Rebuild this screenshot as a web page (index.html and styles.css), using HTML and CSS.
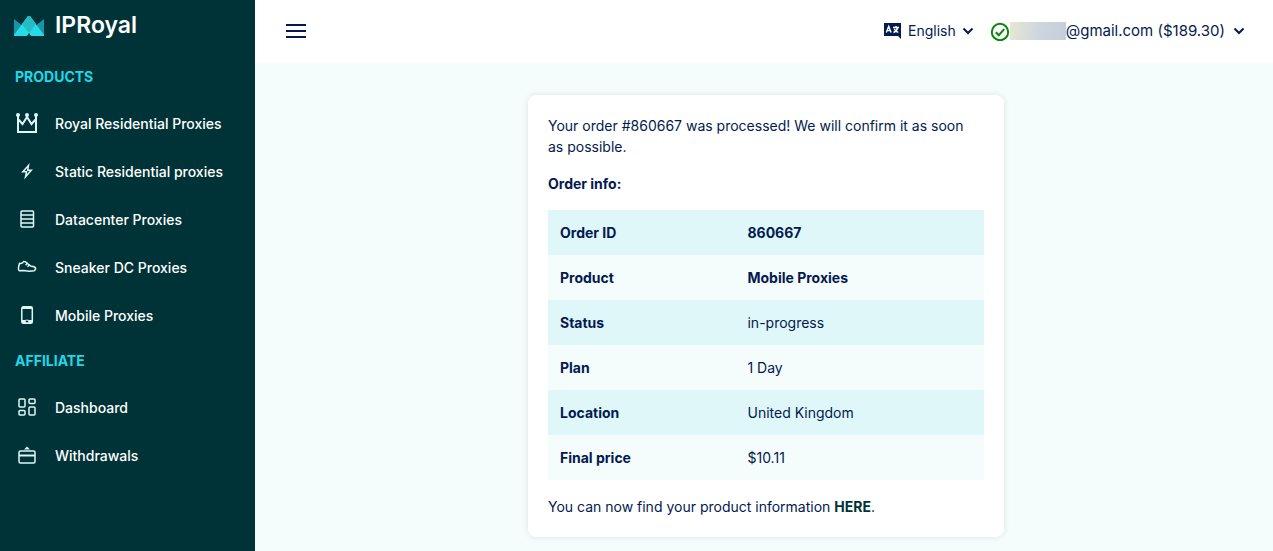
FILE: index.html
```html
<!DOCTYPE html>
<html lang="en">
<head>
    <meta charset="utf-8">
    <title>IPRoyal - Order</title>
    <link rel="stylesheet" href="styles.css">
</head>
<body>
    <aside class="sidebar">
        <a class="logo" href="#">
            <svg width="30" height="20" viewBox="0 0 30 20">
                <path fill="#1995a8" d="M0 3l10 8-10 9zM30 3l-10 8 10 9z"/>
                <path fill="#25dbe5" d="M14 0h2l14 19v1H17l-2-3-2 3H0v-1z"/>
                <path fill="#25bcc4" d="M14 0h2l6 8-7 9-7-9z"/>
            </svg>
            <span>IPRoyal</span>
        </a>

        <nav>
            <h2>Products</h2>
            <ul>
                <li><a href="#">
                    <svg width="24" height="24" viewBox="0 0 24 24" fill="none" stroke="#dff7f9" stroke-width="2">
                        <path d="M3 5v16h18V5v3l-4.5 5L12 6l-4.5 7L3 8z"/>
                        <circle cx="3" cy="4" r="2" fill="#dff7f9" stroke="none"/>
                        <circle cx="12" cy="4" r="2" fill="#dff7f9" stroke="none"/>
                        <circle cx="21" cy="4" r="2" fill="#dff7f9" stroke="none"/>
                    </svg>
                    Royal Residential Proxies</a></li>
                <li><a href="#">
                    <svg width="24" height="24" viewBox="0 0 24 24" fill="none" stroke="#dff7f9" stroke-width="1.5">
                        <path d="M13.5 6.5L7.8 12.8h3.7l-1 5 5.8-6.6h-3.6z"/>
                    </svg>
                    Static Residential proxies</a></li>
                <li><a href="#">
                    <svg width="24" height="24" viewBox="0 0 24 24" fill="none" stroke="#dff7f9" stroke-width="1.5">
                        <rect x="6" y="4" width="12.5" height="16" rx="1"/>
                        <path d="M6 8h12.5M6 12h12.5M6 16h12.5"/>
                    </svg>
                    Datacenter Proxies</a></li>
                <li><a href="#">
                    <svg width="24" height="24" viewBox="0 0 24 24" fill="none" stroke="#dff7f9" stroke-width="1.5" stroke-linejoin="round" stroke-linecap="round">
                        <path d="M4.5 8.2c1.6.5 3.3.2 4.2-1.8l2 .6 4.8 4 3.6.8c1.2.5 1.7 1.5 1.3 2.7l-1.2 1.3-4.7.5c-3 .1-4.5-.9-7-.9l-3.2.3c-.9-.8-1-2-.8-3.4z"/>
                        <path d="M11 9.8l1.3-1.5M13 11.4l1.3-1.6"/>
                    </svg>
                    Sneaker DC Proxies</a></li>
                <li><a href="#">
                    <svg width="24" height="24" viewBox="0 0 24 24" fill="none" stroke="#dff7f9" stroke-width="1.5">
                        <rect x="6.8" y="3.8" width="10.5" height="16.5" rx="1.5"/>
                        <path d="M7 5h10" stroke-width="2"/>
                        <path d="M7 18.5h3.8M13.2 18.5H17" stroke-width="3"/>
                        <path d="M10.5 17.2h3M10.5 20h3" stroke-width="1"/>
                    </svg>
                    Mobile Proxies</a></li>
            </ul>

            <h2>Affiliate</h2>
            <ul>
                <li><a href="#">
                    <svg width="24" height="24" viewBox="0 0 24 24" fill="none" stroke="#dff7f9" stroke-width="1.5">
                        <rect x="4" y="4" width="6" height="8" rx="1"/>
                        <rect x="14" y="4" width="6" height="4.5" rx="1"/>
                        <rect x="4" y="15.5" width="6" height="4.5" rx="1"/>
                        <rect x="14" y="12" width="6" height="8" rx="1"/>
                    </svg>
                    Dashboard</a></li>
                <li><a href="#">
                    <svg width="24" height="24" viewBox="0 0 24 24" fill="none" stroke="#dff7f9" stroke-width="1.5">
                        <rect x="4" y="8" width="16" height="12" rx="1.5"/>
                        <path d="M4 12.5h16" stroke-width="2"/>
                        <path d="M9 6.5l3-3 3 3z" fill="#dff7f9" stroke="none"/>
                    </svg>
                    Withdrawals</a></li>
            </ul>
        </nav>
    </aside>

    <div class="page">
        <header>
            <button class="menu-button" type="button" aria-label="Toggle menu">
                <span></span>
                <span></span>
                <span></span>
            </button>

            <div class="language">
                <svg width="18" height="18" viewBox="0 0 18 18">
                    <path fill="#021a50" d="M0 1h17v16l-3-3H0z"/>
                    <path fill="none" stroke="#fff" stroke-width="1.4" d="M2.3 10.5l2.4-6 2.4 6M3.2 8.6h3M9 5.5h6M12 4v1.5M9.5 10.5c2.3-1 3.8-2.8 4.2-5M10.3 7c.7 1.6 2 2.8 4 3.4"/>
                </svg>
                <select aria-label="Language">
                    <option>English</option>
                </select>
                <svg class="chevron" width="12" height="8" viewBox="0 0 12 8">
                    <path d="M1.5 1.5L6 6l4.5-4.5"/>
                </svg>
            </div>

            <button class="account" type="button">
                <svg class="check" width="20" height="20" viewBox="0 0 20 20">
                    <circle cx="10" cy="11" r="8.2"/>
                    <path d="M5.8 11.2l3 3 5.4-6"/>
                </svg>
                <span class="hidden-name"></span>
                <span>@gmail.com ($189.30)</span>
                <svg class="chevron" width="12" height="8" viewBox="0 0 12 8">
                    <path d="M1.5 1.5L6 6l4.5-4.5"/>
                </svg>
            </button>
        </header>

        <main>
            <section class="card">
                <p>Your order #860667 was processed! We will confirm it as soon as&nbsp;possible.</p>
                <p><strong>Order info:</strong></p>
                <table>
                    <tr>
                        <th scope="row">Order ID</th>
                        <td><strong>860667</strong></td>
                    </tr>
                    <tr>
                        <th scope="row">Product</th>
                        <td><strong>Mobile Proxies</strong></td>
                    </tr>
                    <tr>
                        <th scope="row">Status</th>
                        <td>in-progress</td>
                    </tr>
                    <tr>
                        <th scope="row">Plan</th>
                        <td>1 Day</td>
                    </tr>
                    <tr>
                        <th scope="row">Location</th>
                        <td>United Kingdom</td>
                    </tr>
                    <tr>
                        <th scope="row">Final price</th>
                        <td>$10.11</td>
                    </tr>
                </table>
                <p>You can now find your product information <a href="#">HERE</a>.</p>
            </section>
        </main>
    </div>
</body>
</html>
```
FILE: styles.css
```css
* {
    box-sizing: border-box;
}

body {
    display: flex;
    min-height: 100vh;
    margin: 0;
    font-family: Inter, sans-serif;
    font-size: 14px;
    line-height: 21px;
    color: #021a50;
    background-color: #f5fcfc;
}

/* Sidebar */
.sidebar {
    flex: 0 0 255px;
    background-color: #003337;
}

.logo {
    display: flex;
    align-items: center;
    gap: 11px;
    height: 55px;
    padding: 0 14px 4px;
    color: #fff;
    font-size: 23px;
    font-weight: 600;
    text-decoration: none;
}

.sidebar h2 {
    margin: 0;
    padding: 0 15px;
    font-size: 14px;
    font-weight: 700;
    line-height: 44px;
    text-transform: uppercase;
    color: #20d8e8;
}

.sidebar ul {
    margin: 0;
    padding: 0;
    list-style: none;
}

.sidebar li a {
    display: flex;
    align-items: center;
    gap: 16px;
    height: 48px;
    padding: 0 15px;
    color: #fff;
    font-weight: 500;
    text-decoration: none;
}

.sidebar li svg {
    overflow: visible;
}

/* Top bar */
.page {
    flex: 1;
    min-width: 0;
}

header {
    display: flex;
    align-items: center;
    height: 63px;
    padding: 0 28px 2px 31px;
    background-color: #fff;
}

button,
select {
    padding: 0;
    border: none;
    background: none;
    font: inherit;
    color: inherit;
    cursor: pointer;
}

.menu-button {
    display: flex;
    flex-direction: column;
    gap: 4px;
    width: 20px;
    margin-right: auto;
}

.menu-button span {
    height: 2px;
    background-color: #021a50;
}

.language {
    display: flex;
    align-items: center;
    gap: 6px;
}

.language select {
    appearance: none;
    field-sizing: content;
}

.account {
    display: flex;
    align-items: center;
    margin-left: 16px;
    font-size: 15px;
}

.account .chevron {
    margin-left: 8px;
}

.chevron {
    fill: none;
    stroke: #021a50;
    stroke-width: 2;
}

.check {
    fill: none;
    stroke: #0b850f;
    stroke-width: 2;
}

.hidden-name {
    width: 56px;
    height: 18px;
    background: linear-gradient(100deg, #e6e8d2, #ccd5dd 55%, #c4cfdc);
}

/* Order card */
main {
    padding: 32px 16px 14px 20px;
}

.card {
    max-width: 476px;
    margin: 0 auto;
    padding: 20px;
    background-color: #fff;
    border-radius: 8px;
    box-shadow: 0 0 6px rgba(0, 0, 0, 0.1);
}

.card p {
    margin: 0 0 16px;
}

.card p:last-child {
    margin: 16px 0 0;
}

.card strong,
.card th {
    font-weight: 700;
}

.card a {
    color: #003337;
    font-weight: 700;
    text-decoration: none;
}

table {
    width: 100%;
    border-collapse: collapse;
    table-layout: fixed;
}

th,
td {
    padding: 12px;
    text-align: left;
}

th {
    width: 43%;
}

tr:nth-child(odd) {
    background-color: #dff7f9;
}

tr:nth-child(even) {
    background-color: #f5fcfc;
}
```
